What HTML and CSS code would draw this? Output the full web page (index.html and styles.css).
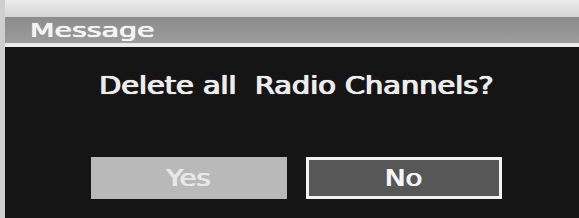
FILE: index.html
```html
<!DOCTYPE html>
<html>
<head>
<meta charset="utf-8">
<link rel="stylesheet" href="styles.css">
</head>
<body>
<div class="dialog">
  <div class="top-strip"></div>
  <div class="titlebar"><span class="title">Message</span></div>
  <div class="rule"></div>
  <div class="content">
    <p class="message"><span class="wide">Delete all&nbsp; Radio Channels?</span></p>
    <div class="buttons">
      <div class="btn btn-yes"><span class="wide">Yes</span></div>
      <div class="btn btn-no"><span class="wide">No</span></div>
    </div>
  </div>
</div>
</body>
</html>
```

FILE: styles.css
```css
html, body {
  margin: 0;
  padding: 0;
  background: #141414;
}
body {
  width: 579px;
  height: 218px;
  overflow: hidden;
  font-family: "DejaVu Sans", "Liberation Sans", sans-serif;
}
.dialog {
  display: flex;
  flex-direction: column;
  height: 218px;
  border-left: 5px solid #cfcfcf;
  box-sizing: border-box;
}
.top-strip {
  height: 17px;
  background: linear-gradient(#ececec, #d4d4d4);
}
.titlebar {
  height: 26px;
  background: linear-gradient(#8c8c8c, #959595 60%, #9c9c9c);
  display: flex;
  align-items: center;
  padding-left: 25px;
}
.title {
  display: inline-block;
  color: #f4f4f4;
  font-size: 20px;
  transform: scaleX(1.42);
  transform-origin: left center;
  text-shadow: 0.4px 0 0 #f4f4f4, -0.4px 0 0 #f4f4f4, 0 0 1px rgba(255,255,255,0.6);
}
.rule {
  height: 4px;
  background: #ececec;
}
.content {
  flex: 1;
  background: #151515;
  display: flex;
  flex-direction: column;
  align-items: center;
  padding-left: 8px;
}
.message {
  margin: 25px 0 0 0;
  height: 28px;
  line-height: 28px;
  font-size: 24px;
  color: #ececec;
  text-shadow: 0.6px 0 0 #ececec, -0.6px 0 0 #ececec, 0 0 1px rgba(255,255,255,0.6);
}
.wide {
  display: inline-block;
  transform: scaleX(1.2);
}
.buttons {
  margin-top: 57px;
  display: flex;
  gap: 19px;
}
.btn {
  width: 196px;
  height: 42px;
  box-sizing: border-box;
  display: flex;
  align-items: center;
  justify-content: center;
  font-size: 23px;
}
.btn-yes {
  background: #b9b9b9;
  color: #e8e8e8;
  text-shadow: 0.5px 0 0 #e8e8e8, -0.5px 0 0 #e8e8e8;
}
.btn-no {
  background: #575757;
  border: 3px solid #f2f2f2;
  color: #f4f4f4;
  text-shadow: 0.5px 0 0 #f4f4f4, -0.5px 0 0 #f4f4f4;
}
```
